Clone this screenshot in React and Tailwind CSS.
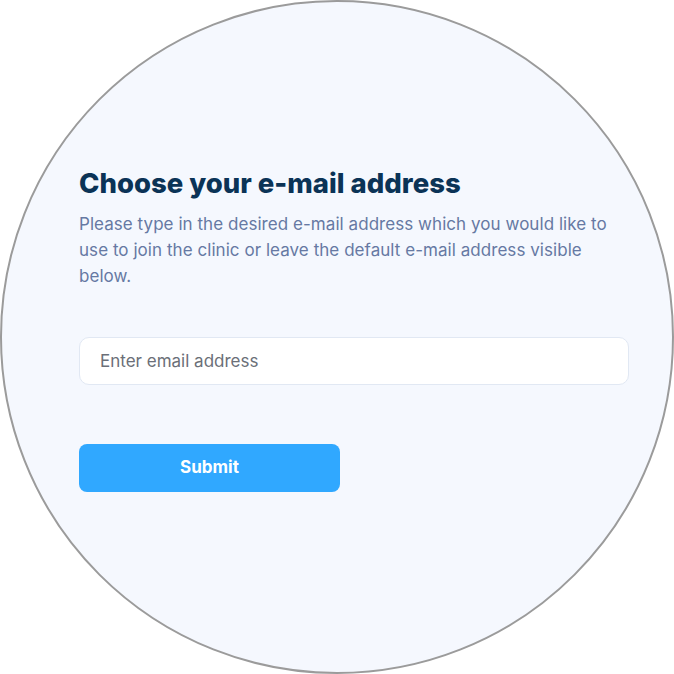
export default function App() {
  return (
    <div className="w-[674px] h-[674px] bg-white" style={{ fontFamily: "Inter, 'Noto Sans', sans-serif" }}>
      <div className="w-[674px] h-[674px] rounded-full border-2 border-[#9b9b9b] bg-[#f5f8fe] pl-[77px] pt-[165px]">
        <h1 className="text-[27.5px] leading-[32px] font-extrabold text-[#0b3356]">
          Choose your e-mail address
        </h1>
        <p className="mt-3 w-[540px] text-[17px] leading-[26px] text-[#6679a3] tracking-[0.05px]">
          Please type in the desired e-mail address which you would like to use to join the clinic or leave the default e-mail address visible below.
        </p>
        <input
          type="email"
          placeholder="Enter email address"
          className="mt-[48px] block w-[550px] h-[48px] rounded-[10px] border border-[#e1e8f3] bg-white px-5 text-[17px] text-[#333] placeholder:text-[#6b6f78] outline-none"
        />
        <button className="mt-[59px] block w-[261px] h-[48px] rounded-[8px] bg-[#30a8ff] text-white text-[17px] font-bold">
          Submit
        </button>
      </div>
    </div>
  );
}
